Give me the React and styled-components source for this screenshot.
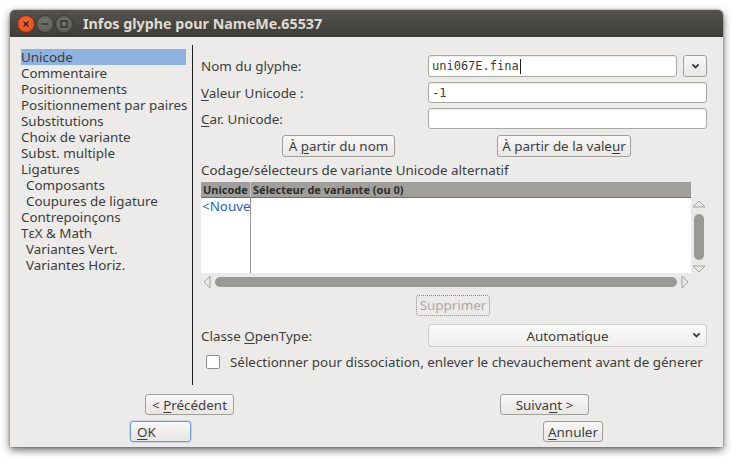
import React from "react";
import styled, { createGlobalStyle } from "styled-components";

const Global = createGlobalStyle`
  html, body { margin: 0; padding: 0; background: #ffffff; }
  body { font-family: "Noto Sans", "DejaVu Sans", sans-serif; font-size: 13.4px; color: #3c3c3c; }
  * { box-sizing: border-box; }
`;

const Page = styled.div`
  width: 740px;
  height: 464px;
  padding: 10px 0 0 10px;
`;

const Window = styled.div`
  width: 713px;
  height: 437px;
  background: #edebe9;
  border-radius: 5px 5px 0 0;
  box-shadow: 0 3px 9px rgba(0, 0, 0, 0.6), 0 0 2px rgba(0,0,0,0.5);
  display: flex;
  flex-direction: column;
`;

const TitleBar = styled.div`
  height: 27px;
  border-radius: 5px 5px 0 0;
  background: linear-gradient(#54534e, #3d3c38);
  display: flex;
  align-items: center;
  padding-left: 7px;
`;

const WinBtn = styled.div`
  width: 18px;
  height: 18px;
  border-radius: 50%;
  margin-right: 1px;
  background: ${p => p.$close ? "radial-gradient(circle at 50% 40%, #f26f3f, #d8461b)" : "radial-gradient(circle at 50% 40%, #74736e, #5a5954)"};
  border: 1px solid ${p => p.$close ? "#8a2b10" : "#3a3936"};
  display: flex;
  align-items: center;
  justify-content: center;
`;

const Title = styled.div`
  margin-left: 9px;
  color: #dfdbd2;
  font-weight: bold;
  font-size: 14.3px;
  font-family: "Noto Sans", "DejaVu Sans", sans-serif;
`;

const Body = styled.div`
  flex: 1;
  display: flex;
  flex-direction: column;
  padding-top: 8px;
`;

const Main = styled.div`
  display: flex;
  height: 340px;
`;

const List = styled.ul`
  list-style: none;
  margin: 4px 0 0 11px;
  padding: 0;
  width: 165px;
`;

const ListItem = styled.li`
  height: 16px;
  line-height: 16px;
  padding-left: ${p => p.$indent ? 5 : 0}px;
  background: ${p => p.$selected ? "#8fb3e0" : "transparent"};
  color: #3c3c3c;
  white-space: nowrap;
`;

const Separator = styled.div`
  width: 1px;
  background: #1e1e1e;
  margin-left: 6px;
`;

const Right = styled.div`
  flex: 1;
  padding: 10px 16px 0 8px;
  display: flex;
  flex-direction: column;
`;

const FormGrid = styled.div`
  display: grid;
  grid-template-columns: 227px 1fr;
  row-gap: 5px;
  align-items: center;
  margin-top: ${p => p.$mt || 0}px;
`;

const Label = styled.div`
  color: #3c3c3c;
  white-space: nowrap;
`;

const U = styled.span`
  text-decoration: underline;
  text-underline-offset: 2px;
`;

const InputWrap = styled.div`
  display: flex;
  gap: 6px;
`;

const TextInput = styled.div`
  flex: 1;
  height: ${p => p.$h || 22}px;
  background: #fff;
  border: 1px solid #a9a7a2;
  border-radius: 3px;
  box-shadow: inset 0 1px 1px rgba(0,0,0,0.08);
  font-family: "DejaVu Sans Mono", monospace;
  font-size: 12px;
  padding-left: 3px;
  color: #3c3c3c;
  display: flex;
  align-items: center;
`;

const Caret = styled.span`
  display: inline-block;
  width: 1px;
  height: 15px;
  background: #222;
  margin-left: 1px;
`;

const Button = styled.div`
  height: ${p => p.$h || 22}px;
  width: ${p => p.$w}px;
  padding: 0 6px;
  display: flex;
  align-items: center;
  justify-content: ${p => p.$align || "center"};
  border: 1px solid ${p => p.$default ? "#6f9ad8" : "#a19f9a"};
  border-radius: 3px;
  background: linear-gradient(#f8f7f6, #e9e7e4);
  box-shadow: ${p => p.$default ? "0 0 0 1px rgba(143,179,224,0.35)" : "none"};
  color: #3c3c3c;
  white-space: nowrap;
  flex: none;
`;

const BtnText = styled.span`
  white-space: pre;
`;

const SmallBtn = styled(Button)`
  width: 24px;
  padding: 0;
`;

const ButtonRow = styled.div`
  display: flex;
  margin-top: 6px;
  padding-left: 81px;
  gap: 102px;
`;

const SectionTitle = styled.div`
  height: 16px;
  line-height: 16px;
  margin-top: 5px;
`;

const Table = styled.div`
  margin-top: 4px;
  display: grid;
  grid-template-columns: 490px 16px;
  grid-template-rows: 16px 75px 17px;
`;

const Header = styled.div`
  background: #a09f9b;
  border-bottom: 1px solid #6e6d69;
  display: flex;
  font-size: 11px;
  font-weight: bold;
  color: #2e2e2e;
`;

const HeadCell = styled.div`
  width: ${p => p.$w ? p.$w + "px" : "auto"};
  flex: ${p => p.$w ? "none" : 1};
  padding-left: 2px;
  line-height: 15px;
  border-right: ${p => p.$w ? "1px solid #c9c8c4" : "none"};
  white-space: nowrap;
  overflow: hidden;
`;

const TBody = styled.div`
  background: #fff;
  display: flex;
`;

const Cell = styled.div`
  width: ${p => p.$w ? p.$w + "px" : "auto"};
  flex: ${p => p.$w ? "none" : 1};
  border-right: ${p => p.$w ? "1px solid #9a9995" : "none"};
  color: #2c62b8;
  white-space: nowrap;
  overflow: hidden;
  line-height: 16px;
  padding-left: 1px;
`;

const VScroll = styled.div`
  background: #ebeae8;
  display: flex;
  flex-direction: column;
  align-items: center;
  justify-content: space-between;
  padding: 2px 0 0;
`;

const VThumb = styled.div`
  width: 10px;
  height: 46px;
  border-radius: 5px;
  background: #9a9995;
`;

const HScroll = styled.div`
  background: #ebeae8;
  display: flex;
  align-items: center;
  padding: 0 2px;
  gap: 4px;
`;

const HThumb = styled.div`
  flex: 1;
  height: 10px;
  border-radius: 5px;
  background: #9a9995;
`;

const Corner = styled.div``;

const DisabledBtn = styled.div`
  align-self: center;
  margin-top: 5px;
  margin-left: -2px;
  height: 21px;
  padding: 0 3px;
  border: 1px dotted #8a8a8a;
  border-radius: 3px;
  color: #a9a8a5;
  line-height: 19px;
`;

const Select = styled.div`
  height: 23px;
  background: linear-gradient(#fafaf9, #efeeec);
  border: 1px solid #cfcdc9;
  border-radius: 3px;
  position: relative;
  display: flex;
  align-items: center;
  justify-content: center;
  color: #3c3c3c;
`;

const SelArrow = styled.div`
  position: absolute;
  right: 5px;
  top: 7px;
  display: flex;
`;

const CheckRow = styled.div`
  display: flex;
  align-items: center;
  margin-top: 6px;
  padding-left: 5px;
  gap: 10px;
`;

const Check = styled.div`
  width: 14px;
  height: 14px;
  border: 1px solid #8e8c88;
  border-radius: 2px;
  background: #fff;
`;

const Footer = styled.div`
  display: flex;
  flex-direction: column;
  gap: 6px;
  margin-top: 9px;
`;

const FooterRow = styled.div`
  display: flex;
  padding-left: ${p => p.$pl}px;
  gap: ${p => p.$gap}px;
`;

const Chevron = ({ size = 9 }) => (
  <svg width={size} height={size * 0.7} viewBox="0 0 10 7">
    <path d="M1.5 1.5 L5 5 L8.5 1.5" fill="none" stroke="#3c3c3c" strokeWidth="2" />
  </svg>
);

const items = [
  ["Unicode", false, true],
  ["Commentaire"],
  ["Positionnements"],
  ["Positionnement par paires"],
  ["Substitutions"],
  ["Choix de variante"],
  ["Subst. multiple"],
  ["Ligatures"],
  ["Composants", true],
  ["Coupures de ligature", true],
  ["Contrepoinçons"],
  ["TεX & Math"],
  ["Variantes Vert.", true],
  ["Variantes Horiz.", true],
];

export default function App() {
  return (
    <>
      <Global />
      <Page>
        <Window>
          <TitleBar>
            <WinBtn $close>
              <svg width="8" height="8" viewBox="0 0 8 8">
                <path d="M1.5 1.5 L6.5 6.5 M6.5 1.5 L1.5 6.5" stroke="#3b1a0c" strokeWidth="1.4" />
              </svg>
            </WinBtn>
            <WinBtn>
              <svg width="8" height="8" viewBox="0 0 8 8">
                <path d="M0.5 4 H7.5" stroke="#2e2d2a" strokeWidth="1.4" />
              </svg>
            </WinBtn>
            <WinBtn>
              <svg width="8" height="8" viewBox="0 0 8 8">
                <rect x="1" y="1" width="6" height="6" fill="none" stroke="#2e2d2a" strokeWidth="1.3" />
              </svg>
            </WinBtn>
            <Title>Infos glyphe pour NameMe.65537</Title>
          </TitleBar>
          <Body>
            <Main>
              <List>
                {items.map(([t, ind, sel]) => (
                  <ListItem key={t} $indent={ind} $selected={sel}>{t}</ListItem>
                ))}
              </List>
              <Separator />
              <Right>
                <FormGrid>
                  <Label>Nom du glyphe:</Label>
                  <InputWrap>
                    <TextInput>uni067E.fina<Caret /></TextInput>
                    <SmallBtn><Chevron /></SmallBtn>
                  </InputWrap>
                  <Label><U>V</U>aleur Unicode :</Label>
                  <TextInput $h={21}>-1</TextInput>
                  <Label><U>C</U>ar. Unicode:</Label>
                  <TextInput $h={21}></TextInput>
                </FormGrid>
                <ButtonRow>
                  <Button $w={113}><BtnText>À <U>p</U>artir du nom</BtnText></Button>
                  <Button $w={134}><BtnText>À partir de la vale<U>u</U>r</BtnText></Button>
                </ButtonRow>
                <SectionTitle>Codage/sélecteurs de variante Unicode alternatif</SectionTitle>
                <Table>
                  <Header>
                    <HeadCell $w={50}>Unicode</HeadCell>
                    <HeadCell>Sélecteur de variante (ou 0)</HeadCell>
                  </Header>
                  <Corner />
                  <TBody>
                    <Cell $w={50}>&lt;Nouveau&gt;</Cell>
                    <Cell></Cell>
                  </TBody>
                  <VScroll>
                    <svg width="14" height="8" viewBox="0 0 14 8">
                      <path d="M1 7 L7 1 L13 7 Z" fill="none" stroke="#a3a29e" strokeWidth="1" />
                    </svg>
                    <VThumb />
                    <svg width="14" height="8" viewBox="0 0 14 8">
                      <path d="M1 1 L7 7 L13 1 Z" fill="none" stroke="#a3a29e" strokeWidth="1" />
                    </svg>
                  </VScroll>
                  <HScroll>
                    <svg width="8" height="14" viewBox="0 0 8 14">
                      <path d="M7 1 L1 7 L7 13 Z" fill="none" stroke="#a3a29e" strokeWidth="1" />
                    </svg>
                    <HThumb />
                    <svg width="8" height="14" viewBox="0 0 8 14">
                      <path d="M1 1 L7 7 L1 13 Z" fill="none" stroke="#a3a29e" strokeWidth="1" />
                    </svg>
                  </HScroll>
                  <Corner />
                </Table>
                <DisabledBtn>Supprimer</DisabledBtn>
                <FormGrid $mt={8}>
                  <Label>Classe <U>O</U>penType:</Label>
                  <Select>
                    Automatique
                    <SelArrow><Chevron /></SelArrow>
                  </Select>
                </FormGrid>
                <CheckRow>
                  <Check />
                  <Label>Sélectionner pour dissociation, enlever le chevauchement avant de génerer</Label>
                </CheckRow>
              </Right>
            </Main>
            <Footer>
              <FooterRow $pl={135} $gap={266}>
                <Button $w={89} $h={21}><BtnText>&lt; <U>P</U>récédent</BtnText></Button>
                <Button $w={89} $h={21}><BtnText>Suiva<U>n</U>t &gt;</BtnText></Button>
              </FooterRow>
              <FooterRow $pl={120} $gap={352}>
                <Button $w={61} $h={21} $default $align="flex-start"><BtnText><U>O</U>K</BtnText></Button>
                <Button $w={60} $h={21}><BtnText><U>A</U>nnuler</BtnText></Button>
              </FooterRow>
            </Footer>
          </Body>
        </Window>
      </Page>
    </>
  );
}
